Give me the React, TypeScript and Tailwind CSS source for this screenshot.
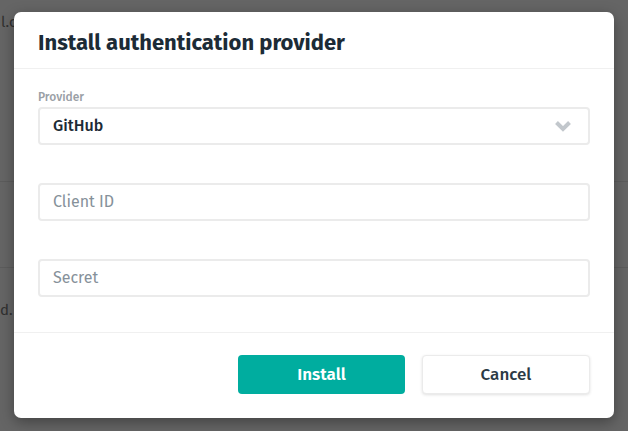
const font = { fontFamily: '"Fira Sans", Roboto, "Liberation Sans", sans-serif' };

function Field({ placeholder }: { placeholder: string }) {
  return (
    <div className="h-[38px] rounded-[4px] border-2 border-[#ebebeb] flex items-center px-[13px]">
      <span className="text-[16px] text-[#86919a]">{placeholder}</span>
    </div>
  );
}

export default function App() {
  return (
    <div className="relative h-[431px] w-[628px] overflow-hidden bg-[#656565]" style={font}>
      {/* page behind the overlay */}
      <div className="h-[182px] border-b border-[#5c5c5c] pt-[10px]">
        <span className="ml-[1px] text-[15px] text-[#303030]">l.com</span>
      </div>
      <div className="h-[86px] border-b border-[#5c5c5c]" />
      <div className="pt-[30px]">
        <span className="text-[15px] text-[#303030]">d.</span>
      </div>

      <div className="absolute left-[14px] top-[12px] w-[600px] h-[406px] rounded-[7px] bg-white shadow-[0_4px_14px_rgba(0,0,0,0.35)] flex flex-col">
        <div className="h-[57px] border-b border-[#f0f0f0] px-[24px] pt-[18px]">
          <h1 className="text-[22px] font-bold leading-[26px] text-[#1c2b36]">
            Install authentication provider
          </h1>
        </div>

        <div className="flex-1 px-[24px] pt-[21px] flex flex-col">
          <label className="text-[12px] font-medium leading-[14px] text-[#9aa0a6] mb-[3px]">Provider</label>
          <div className="h-[38px] rounded-[4px] border-2 border-[#ebebeb] flex items-center justify-between pl-[13px] pr-[16px]">
            <span className="text-[16px] font-medium text-[#1c2b36]">GitHub</span>
            <svg width="18" height="12" viewBox="0 0 18 12" className="text-[#c2c7cc]">
              <polyline points="2.5,2.5 9,9 15.5,2.5" fill="none" stroke="currentColor" strokeWidth="4" strokeLinejoin="miter" />
            </svg>
          </div>
          <div className="mt-[38px]">
            <Field placeholder="Client ID" />
          </div>
          <div className="mt-[38px]">
            <Field placeholder="Secret" />
          </div>
        </div>

        <div className="h-[86px] border-t border-[#f0f0f0] px-[24px] pt-[22px] flex justify-end gap-[17px]">
          <button className="w-[167px] h-[39px] rounded-[4px] bg-[#00ad9f] text-white text-[17px] font-semibold">
            Install
          </button>
          <button className="w-[168px] h-[39px] rounded-[4px] bg-white border border-[#ebebeb] shadow-[0_1px_3px_rgba(0,0,0,0.12)] text-[17px] font-medium text-[#2c3a45]">
            Cancel
          </button>
        </div>
      </div>
    </div>
  );
}
